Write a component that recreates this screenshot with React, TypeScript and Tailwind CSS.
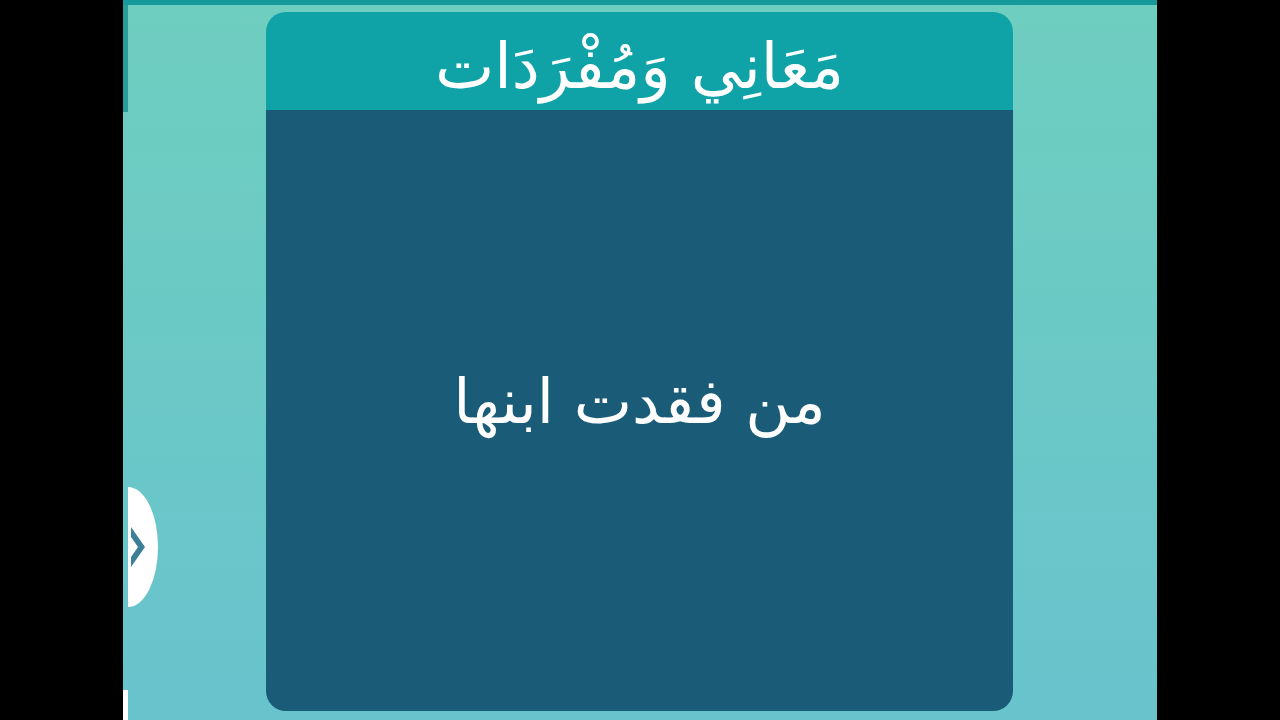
export default function App() {
  return (
    <div className="flex h-[720px] w-[1280px] overflow-hidden bg-black">
      <div className="w-[123px] shrink-0 bg-black" />
      <div className="relative flex w-[1034px] shrink-0 flex-col bg-gradient-to-b from-[#6ecebf] to-[#68c3cd]">
        <div className="h-[5px] shrink-0 bg-[#17999b]" />
        <div className="flex flex-1">
          <div className="flex w-[5px] shrink-0 flex-col justify-between">
            <div className="h-[107px] bg-[#2a9d9a]" />
            <div className="h-[30px] bg-white" />
          </div>
          <div className="flex flex-1 justify-center pr-[6px] pt-[7px]">
            <div
              className="flex h-[699px] w-[747px] flex-col overflow-hidden rounded-[20px]"
              style={{ fontFamily: '"DejaVu Sans", sans-serif' }}
            >
              <div className="flex h-[98px] shrink-0 items-center justify-center bg-[#0fa3a8] pt-[10px]">
                <h1 dir="rtl" className="text-[63px] leading-none text-white">
                  مَعَانِي وَمُفْرَدَات
                </h1>
              </div>
              <div className="flex flex-1 items-center justify-center bg-[#1a5c77] pb-[18px]">
                <p dir="rtl" className="text-[62px] leading-none text-white">
                  من فقدت ابنها
                </p>
              </div>
            </div>
          </div>
        </div>
        <button className="absolute left-[5px] top-[487px] flex h-[120px] w-[30px] items-center rounded-tr-[30px_60px] rounded-br-[30px_60px] bg-white">
          <svg width="18" height="44" viewBox="0 0 18 44" className="ml-[1px]">
            <path d="M2 2 L16 22 L2 42 L2 32 L9 22 L2 12 Z" fill="#3e7f98" />
          </svg>
        </button>
      </div>
      <div className="flex-1 bg-black" />
    </div>
  );
}
